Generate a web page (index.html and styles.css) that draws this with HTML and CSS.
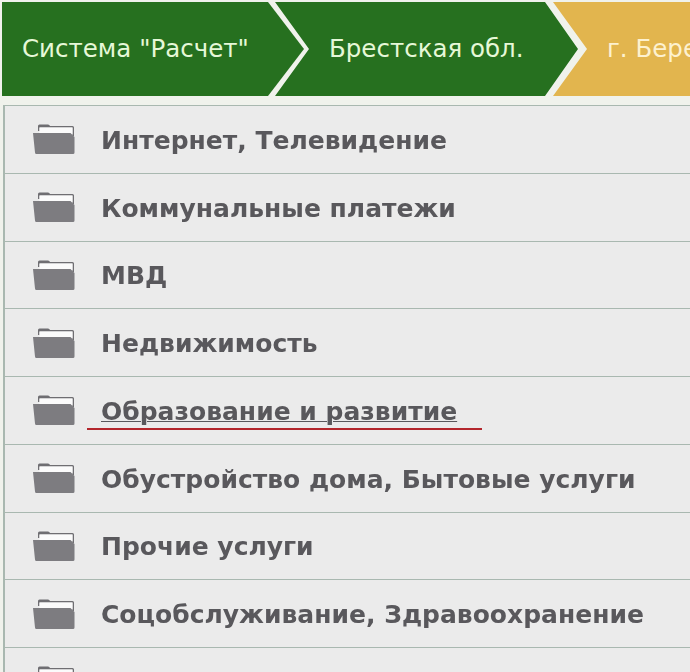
FILE: index.html
```html
<!DOCTYPE html>
<html lang="ru">
<head>
    <meta charset="UTF-8">
    <title>Система "Расчет"</title>
    <link rel="stylesheet" href="styles.css">
</head>
<body>
    <svg class="icon-defs" width="0" height="0">
        <symbol id="folder" viewBox="0 0 42 30">
            <path d="M5 7V2Q5 0.500 6.500 0.500H15Q16.500 0.500 17 2H39.500Q41 2 41 3.500V12H39.500V3.500H6.500V7Z" fill="#6f6e72"/>
            <path d="M6.500 3.500H39.500V10H6.500Z" fill="#fbfbfb"/>
            <path d="M0 9H37.500L41.500 13V28.500Q41.500 30 40 30H3.500Q2 30 2 28.500Z" fill="#7d7c80"/>
        </symbol>
    </svg>

    <nav class="breadcrumbs">
        <a href="#" class="crumb crumb-first">Система "Расчет"</a>
        <a href="#" class="crumb crumb-middle">Брестская обл.</a>
        <a href="#" class="crumb crumb-last">г. Береза</a>
    </nav>

    <ul class="service-list">
        <li class="service-item"><svg class="folder"><use href="#folder"/></svg><span>Интернет, Телевидение</span></li>
        <li class="service-item"><svg class="folder"><use href="#folder"/></svg><span>Коммунальные платежи</span></li>
        <li class="service-item"><svg class="folder"><use href="#folder"/></svg><span>МВД</span></li>
        <li class="service-item"><svg class="folder"><use href="#folder"/></svg><span>Недвижимость</span></li>
        <li class="service-item marked"><svg class="folder"><use href="#folder"/></svg><span class="hover-link">Образование и развитие</span></li>
        <li class="service-item"><svg class="folder"><use href="#folder"/></svg><span>Обустройство дома, Бытовые услуги</span></li>
        <li class="service-item"><svg class="folder"><use href="#folder"/></svg><span>Прочие услуги</span></li>
        <li class="service-item"><svg class="folder"><use href="#folder"/></svg><span>Соцобслуживание, Здравоохранение</span></li>
        <li class="service-item"><svg class="folder"><use href="#folder"/></svg></li>
    </ul>
</body>
</html>
```

FILE: styles.css
```css
:root {
    --green: #26701f;
    --yellow: #e2b54e;
    --page: #f0f2ec;
    --row: #ebebeb;
    --line: #a9b8b0;
    --text: #59585c;
}

html,
body {
    height: 672px;
    overflow: hidden;
}

body {
    margin: 0;
    background-color: var(--page);
    font-family: "DejaVu Sans", sans-serif;
}

.icon-defs {
    position: absolute;
}

.breadcrumbs {
    display: flex;
    height: 94px;
    margin: 2px 0 0 2px;
    overflow: hidden;
    font-size: 24.5px;
    filter: blur(0.4px);
}

.crumb {
    flex-shrink: 0;
    display: flex;
    align-items: center;
    padding-bottom: 2px;
    box-sizing: border-box;
    color: #e6f8d8;
    text-decoration: none;
    background-color: var(--green);
}

.crumb-first {
    width: 302px;
    padding-left: 20px;
    clip-path: polygon(0 0, calc(100% - 36px) 0, 100% 50%, calc(100% - 36px) 100%, 0 100%);
}

.crumb-middle {
    width: 303px;
    margin-left: -29px;
    padding-left: 54px;
    clip-path: polygon(0 0, calc(100% - 33px) 0, 100% 50%, calc(100% - 33px) 100%, 0 100%, 34px 50%);
}

.crumb-last {
    width: 160px;
    margin-left: -25px;
    padding-left: 54px;
    white-space: nowrap;
    color: #fdf1cf;
    background-color: var(--yellow);
    clip-path: polygon(0 0, 100% 0, 100% 100%, 0 100%, 34px 50%);
}

.service-list {
    list-style: none;
    height: 567px;
    margin: 9px 0 0 3px;
    padding: 0;
    overflow: hidden;
    border-left: 2px solid var(--line);
    background-color: var(--row);
    filter: blur(0.4px);
}

.service-item {
    position: relative;
    display: flex;
    align-items: center;
    gap: 26px;
    height: 67.75px;
    box-sizing: border-box;
    padding-left: 28px;
    border-top: 1px solid var(--line);
    font-size: 25px;
    font-weight: bold;
    color: var(--text);
}

.service-item span {
    padding-top: 2px;
}

.folder {
    flex-shrink: 0;
    width: 42px;
    height: 30px;
}

.hover-link {
    text-decoration: underline;
    text-decoration-thickness: 1px;
}

/* red hand drawn line under the marked row */
.marked::after {
    content: "";
    position: absolute;
    left: 82px;
    bottom: 14px;
    width: 395px;
    height: 2px;
    background-color: #b3262c;
}
```
